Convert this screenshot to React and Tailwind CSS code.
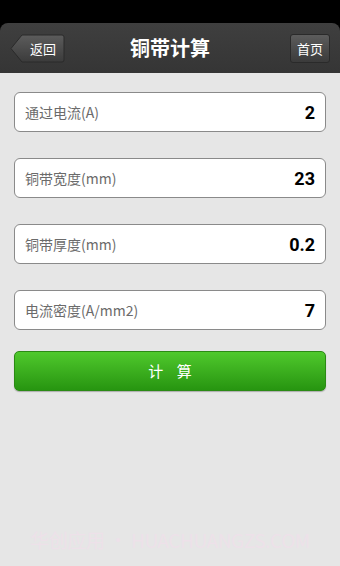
const fields = [
  { label: '通过电流(A)', value: '2' },
  { label: '铜带宽度(mm)', value: '23' },
  { label: '铜带厚度(mm)', value: '0.2' },
  { label: '电流密度(A/mm2)', value: '7' },
];

const font = { fontFamily: '"Noto Sans CJK SC", Roboto, sans-serif' };

export default function App() {
  return (
    <div className="w-[340px] h-[566px] bg-black flex flex-col overflow-hidden" style={font}>
      {/* status bar */}
      <div className="h-[23px] shrink-0" />

      {/* title bar */}
      <div className="h-[50px] shrink-0 bg-gradient-to-b from-[#3f3f3f] to-[#353535] rounded-t-[8px] flex items-center justify-between px-[10px] relative">
        <button className="relative h-[29px] w-[55px] flex items-center justify-end pr-[9px]">
          <svg className="absolute inset-0" width="55" height="29" viewBox="0 0 55 29">
            <defs>
              <linearGradient id="bk" x1="0" y1="0" x2="0" y2="1">
                <stop offset="0" stopColor="#5c5c5c" />
                <stop offset="1" stopColor="#3b3b3b" />
              </linearGradient>
            </defs>
            <path d="M1 14.5 L12 1 H52 a2 2 0 0 1 2 2 V26 a2 2 0 0 1 -2 2 H12 Z" fill="url(#bk)" stroke="#2a2a2a" strokeWidth="1" />
          </svg>
          <span className="relative text-white text-[13px] leading-none">返回</span>
        </button>
        <h1 className="absolute left-1/2 -translate-x-1/2 text-white text-[20px] font-bold leading-none">铜带计算</h1>
        <button className="h-[29px] w-[40px] rounded-[3px] bg-gradient-to-b from-[#5c5c5c] to-[#3b3b3b] border border-[#2a2a2a] text-white text-[13px] leading-none flex items-center justify-center">
          首页
        </button>
      </div>

      {/* body */}
      <div className="flex-1 bg-[#e6e6e6] flex flex-col px-[14px] pt-[19px] relative">
        <div className="flex flex-col gap-[26px]">
          {fields.map((f) => (
            <div
              key={f.label}
              className="h-[40px] bg-white border border-[#8a8a8a] rounded-[6px] flex items-center justify-between pl-[10px] pr-[10px]"
            >
              <span className="text-[14px] text-[#6b6b6b]">{f.label}</span>
              <span className="text-[18px] font-bold text-black" style={{ fontFamily: 'Roboto, "Noto Sans", sans-serif' }}>{f.value}</span>
            </div>
          ))}
        </div>

        <button className="mt-[21px] h-[40px] rounded-[5px] bg-gradient-to-b from-[#4fc92c] to-[#279510] border border-[#2b8a14] shadow-[0_1px_1px_rgba(0,0,0,0.25)] text-white text-[15px] tracking-[0.9em] pl-[0.9em]">
          计算
        </button>

        <div className="absolute left-0 right-0 bottom-[12px] text-center text-[19px] tracking-[-0.02em] text-[#ede1e9]">
          华创应用 · HUACHUANGZS.COM
        </div>
      </div>
    </div>
  );
}
